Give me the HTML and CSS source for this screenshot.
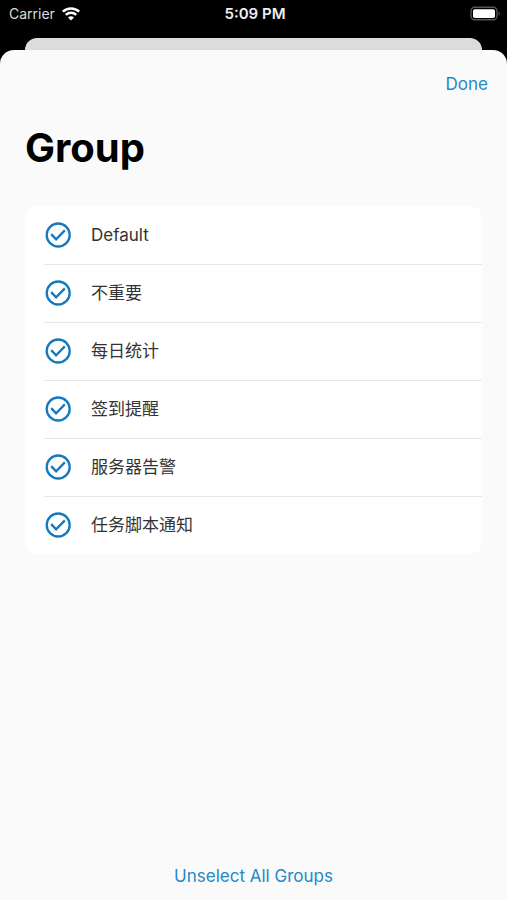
FILE: index.html
```html
<!DOCTYPE html>
<html lang="en">
<head>
  <meta charset="UTF-8">
  <meta name="viewport" content="width=device-width, initial-scale=1">
  <title>Group</title>
  <link rel="stylesheet" href="styles.css">
</head>
<body>
  <!-- Shared check icon -->
  <svg class="sprite" aria-hidden="true">
    <symbol id="check" viewBox="0 0 26 26">
      <circle cx="13.2" cy="13" r="11.5" fill="none" stroke="currentColor" stroke-width="2.3"/>
      <path d="M6.2 12.1l4.9 5.2 8.7-8.9" fill="none" stroke="currentColor" stroke-width="2.3"/>
    </symbol>
  </svg>

  <header class="status-bar">
    <div class="carrier">
      <span>Carrier</span>
      <svg class="wifi" viewBox="0 0 18 14" aria-hidden="true">
        <path d="M.8 4.7a11.8 11.8 0 0 1 16.4 0M3.8 7.9a7.5 7.5 0 0 1 10.4 0" fill="none" stroke="#fff" stroke-width="2.5"/>
        <path d="M9 13.6l-3-3a4.3 4.3 0 0 1 6 0z" fill="#fff"/>
      </svg>
    </div>
    <time class="clock">5:09 PM</time>
    <svg class="battery" viewBox="0 0 30 14" aria-hidden="true">
      <rect x="0" y=".2" width="26" height="12.6" rx="3.8" fill="none" stroke="#555" stroke-width="1.4"/>
      <rect x="2" y="2.2" width="22" height="8.8" rx="1.8" fill="#fff"/>
      <path d="M27.6 4.3a2.5 2.5 0 0 1 0 4.4z" fill="#555"/>
    </svg>
  </header>
  <div class="back-card"></div>

  <main class="sheet">
    <div class="toolbar">
      <button type="button">Done</button>
    </div>
    <h1>Group</h1>

    <ul class="group-list">
      <li><label><input type="checkbox" checked><svg class="check"><use href="#check"/></svg><span>Default</span></label></li>
      <li><label><input type="checkbox" checked><svg class="check"><use href="#check"/></svg><span lang="zh-CN">不重要</span></label></li>
      <li><label><input type="checkbox" checked><svg class="check"><use href="#check"/></svg><span lang="zh-CN">每日统计</span></label></li>
      <li><label><input type="checkbox" checked><svg class="check"><use href="#check"/></svg><span lang="zh-CN">签到提醒</span></label></li>
      <li><label><input type="checkbox" checked><svg class="check"><use href="#check"/></svg><span lang="zh-CN">服务器告警</span></label></li>
      <li><label><input type="checkbox" checked><svg class="check"><use href="#check"/></svg><span lang="zh-CN">任务脚本通知</span></label></li>
    </ul>

    <div class="bottom">
      <button type="button" id="toggle-all">Unselect All Groups</button>
    </div>
  </main>

  <script>
    // Clear every group
    document.getElementById('toggle-all').onclick = () => {
      document.querySelectorAll('.group-list input').forEach(box => {
        box.checked = false;
      });
    };
  </script>
</body>
</html>
```
FILE: styles.css
```css
:root {
  --bg: #fafafa; --fg: #333;
  --accent: #1579bd; --link: #2389c7;
}
*, *::before, *::after { box-sizing: border-box; }
body {
  margin: 0; min-height: 100vh;
  display: flex; flex-direction: column;
  background: #000; color: var(--fg);
  font-family: Inter, "Noto Sans CJK SC", sans-serif;
  font-size: 17px; line-height: 24px;
}
.sprite { display: none; }
/* Status bar */
.status-bar {
  display: grid; grid-template-columns: 1fr auto 1fr; align-items: center;
  height: 28px; margin-bottom: 10px; padding: 0 6px 0 9px;
  color: #fff; font-size: 14px;
}
.carrier { display: flex; align-items: center; gap: 7px; color: #ddd; }
.wifi { width: 18px; height: 14px; overflow: visible; }
.clock { font-size: 15px; font-weight: 600; color: #eee; }
.battery { width: 30px; height: 14px; justify-self: end; overflow: visible; }
/* Sheet */
.back-card {
  height: 12px; margin: 0 25px;
  background: #dcdcdc; border-radius: 12px 12px 0 0;
}
.sheet {
  flex: 1; display: flex; flex-direction: column;
  padding: 22px 25px 12px;
  background: var(--bg); border-radius: 14px 14px 0 0;
}
button {
  padding: 0; border: none; background: none; cursor: pointer;
  color: var(--link); font: inherit;
}
.toolbar { display: flex; justify-content: flex-end; margin-right: -6px; }
h1 {
  margin: 28px 0 34px;
  color: #000; font-size: 40px; line-height: 48px; font-weight: 700;
}
/* Group list */
.group-list {
  margin: 0; padding: 0; list-style: none;
  background: #fff; border-radius: 12px;
}
.group-list li + li::before {
  content: ""; display: block;
  height: 1px; margin: 0 0 -1px 19px; background: #e6e6e6;
}
.group-list label {
  display: flex; align-items: center;
  height: 58px; padding: 0 20px; cursor: pointer;
}
.group-list input {
  appearance: none; width: 0; height: 0; margin: 0;
}
.check { width: 26px; height: 26px; margin-right: 20px; color: var(--accent); }
input:not(:checked) + .check { color: #ccc; }
input:focus-visible + .check { outline: 2px solid var(--link); border-radius: 50%; }
.bottom { margin-top: auto; text-align: center; }
```
